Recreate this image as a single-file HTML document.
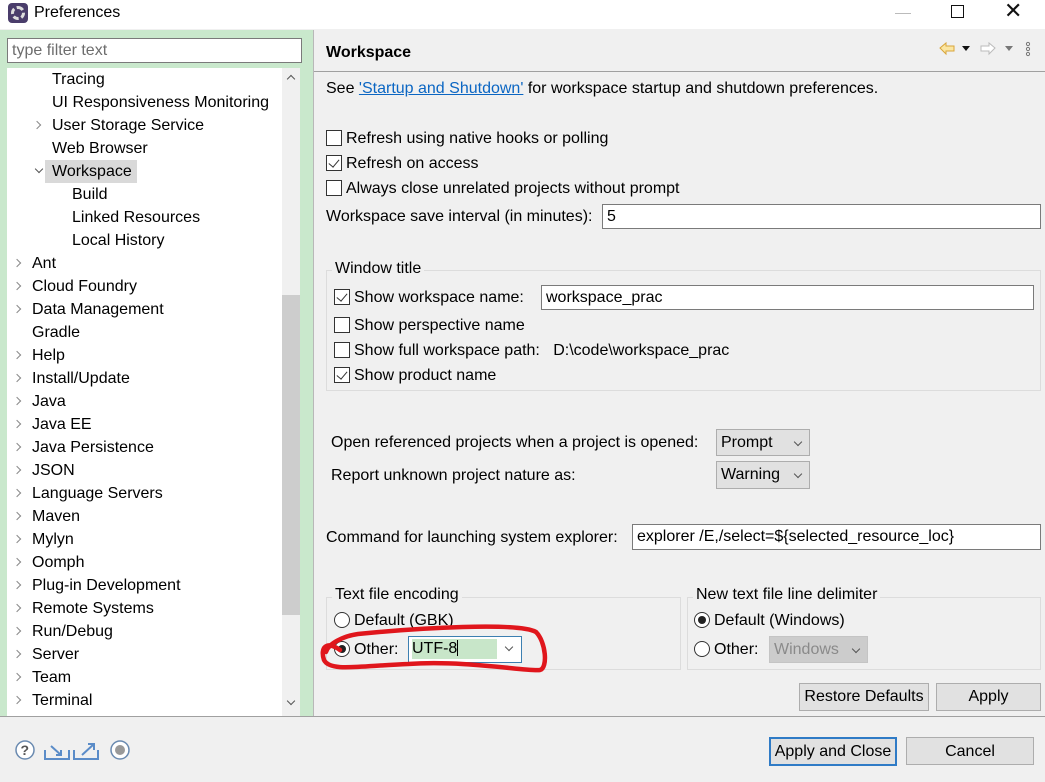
<!DOCTYPE html>
<html><head><meta charset="utf-8"><style>
*{margin:0;padding:0;box-sizing:border-box}
body{width:1045px;height:782px;position:relative;overflow:hidden;background:#f0f0f0;font-family:"Liberation Sans","Noto Sans CJK SC",sans-serif;font-size:16px;color:#000}
.a{position:absolute;white-space:nowrap}
.t{position:absolute;white-space:nowrap;line-height:24px;height:24px}
.cb{position:absolute;width:16px;height:16px;border:1px solid #333;background:#fff}
.cb.on::after{content:"";position:absolute;left:4px;top:1px;width:5px;height:9px;border:solid #333;border-width:0 1.5px 1.5px 0;transform:rotate(40deg)}
.rd{position:absolute;width:16px;height:16px;border:1px solid #333;border-radius:50%;background:#fff}
.rd.on::after{content:"";position:absolute;left:3px;top:3px;width:8px;height:8px;border-radius:50%;background:#222}
.in{position:absolute;background:#fff;border:1px solid #7a7a7a;padding-left:4px;line-height:23px}
.cmb{position:absolute;background:#e1e1e1;border:1px solid #adadad;padding-left:4px;line-height:25px}
.cmb::after{content:"";position:absolute;right:8px;top:9px;width:5px;height:5px;border:solid #555;border-width:0 1px 1px 0;transform:rotate(45deg)}
.grp{position:absolute;border:1px solid #dcdcdc}
.lbl{position:absolute;background:#f0f0f0;padding:0 3px;line-height:18px}
.btn{position:absolute;background:#e1e1e1;border:1px solid #adadad;text-align:center}
.ar{position:absolute;width:6px;height:6px;border:solid #888;border-width:1.3px 1.3px 0 0;transform:rotate(45deg)}
.dn{position:absolute;width:6px;height:6px;border:solid #555;border-width:0 1.3px 1.3px 0;transform:rotate(45deg)}
</style></head><body>
<div class="a" style="left:0;top:0;width:1045px;height:29px;background:#fff"></div>
<div class="a" style="left:8px;top:3px;width:20px;height:20px;border-radius:4px;background:#4a3d6b"></div>
<div class="a" style="left:11px;top:6px;width:14px;height:14px;border-radius:50%;border:3px dashed #ddd;background:#4a3d6b"></div>
<div class="a" style="left:34px;top:2px;font-size:16px;line-height:22px">Preferences</div>
<div class="a" style="left:895px;top:13px;width:16px;height:1px;background:#bbb"></div>
<div class="a" style="left:951px;top:5px;width:13px;height:13px;border:1px solid #111"></div>
<div class="a" style="left:1004px;top:-1px;font-size:22px;line-height:24px;color:#111">✕</div>

<div class="a" style="left:0;top:30px;width:313px;height:686px;background:#c9e8cc"></div>
<div class="a" style="left:7px;top:38px;width:295px;height:25px;background:#fff;border:1px solid #7a7a7a;color:#6d6d6d;padding-left:4px;line-height:23px">type filter text</div>
<div class="a" style="left:7px;top:68px;width:293px;height:648px;background:#fff"></div>
<div class="a" style="left:282px;top:68px;width:18px;height:648px;background:#f0f0f0"></div>
<div class="a" style="left:282px;top:295px;width:18px;height:320px;background:#cdcdcd"></div>
<div class="a" style="left:288px;top:76px;width:6px;height:6px;border:solid #555;border-width:1.3px 0 0 1.3px;transform:rotate(45deg)"></div>
<div class="dn" style="left:288px;top:698px"></div>
<div class="a" style="left:313px;top:30px;width:1px;height:686px;background:#b8b8b8"></div>
<div class="a" style="left:45px;top:160px;width:92px;height:23px;background:#d9d9d9"></div>

<div class="t" style="left:52px;top:68px">Tracing</div>
<div class="t" style="left:52px;top:91px">UI Responsiveness Monitoring</div>
<div class="ar" style="left:34px;top:122px"></div><div class="t" style="left:52px;top:114px">User Storage Service</div>
<div class="t" style="left:52px;top:137px">Web Browser</div>
<div class="dn" style="left:36px;top:166px"></div><div class="t" style="left:52px;top:160px">Workspace</div>
<div class="t" style="left:72px;top:183px">Build</div>
<div class="t" style="left:72px;top:206px">Linked Resources</div>
<div class="t" style="left:72px;top:229px">Local History</div>
<div class="ar" style="left:14px;top:260px"></div><div class="t" style="left:32px;top:252px">Ant</div>
<div class="ar" style="left:14px;top:283px"></div><div class="t" style="left:32px;top:275px">Cloud Foundry</div>
<div class="ar" style="left:14px;top:306px"></div><div class="t" style="left:32px;top:298px">Data Management</div>
<div class="t" style="left:32px;top:321px">Gradle</div>
<div class="ar" style="left:14px;top:352px"></div><div class="t" style="left:32px;top:344px">Help</div>
<div class="ar" style="left:14px;top:375px"></div><div class="t" style="left:32px;top:367px">Install/Update</div>
<div class="ar" style="left:14px;top:398px"></div><div class="t" style="left:32px;top:390px">Java</div>
<div class="ar" style="left:14px;top:421px"></div><div class="t" style="left:32px;top:413px">Java EE</div>
<div class="ar" style="left:14px;top:444px"></div><div class="t" style="left:32px;top:436px">Java Persistence</div>
<div class="ar" style="left:14px;top:467px"></div><div class="t" style="left:32px;top:459px">JSON</div>
<div class="ar" style="left:14px;top:490px"></div><div class="t" style="left:32px;top:482px">Language Servers</div>
<div class="ar" style="left:14px;top:513px"></div><div class="t" style="left:32px;top:505px">Maven</div>
<div class="ar" style="left:14px;top:536px"></div><div class="t" style="left:32px;top:528px">Mylyn</div>
<div class="ar" style="left:14px;top:559px"></div><div class="t" style="left:32px;top:551px">Oomph</div>
<div class="ar" style="left:14px;top:582px"></div><div class="t" style="left:32px;top:574px">Plug-in Development</div>
<div class="ar" style="left:14px;top:605px"></div><div class="t" style="left:32px;top:597px">Remote Systems</div>
<div class="ar" style="left:14px;top:628px"></div><div class="t" style="left:32px;top:620px">Run/Debug</div>
<div class="ar" style="left:14px;top:651px"></div><div class="t" style="left:32px;top:643px">Server</div>
<div class="ar" style="left:14px;top:674px"></div><div class="t" style="left:32px;top:666px">Team</div>
<div class="ar" style="left:14px;top:697px"></div><div class="t" style="left:32px;top:689px">Terminal</div>

<div class="t" style="left:326px;top:41px;font-weight:bold;font-size:16px">Workspace</div>
<div class="a" style="left:314px;top:71px;width:731px;height:1px;background:#a0a0a0"></div>
<svg class="a" style="left:938px;top:40px" width="100" height="18">
<path d="M2 8 L8 3 L8 6 L16 6 L16 11 L8 11 L8 14 Z" fill="#fbe6a2" stroke="#d8a53a"/>
<path d="M24 6 L32 6 L28 11 Z" fill="#111"/>
<path d="M57 8 L51 3 L51 6 L43 6 L43 11 L51 11 L51 14 Z" fill="#fff" stroke="#bbb"/>
<path d="M67 6 L75 6 L71 11 Z" fill="#777"/>
<circle cx="90" cy="4" r="1.6" fill="none" stroke="#777"/><circle cx="90" cy="9" r="1.6" fill="none" stroke="#777"/><circle cx="90" cy="14" r="1.6" fill="none" stroke="#777"/>
</svg>

<div class="t" style="left:326px;top:77px">See <span style="color:#0b66c3;text-decoration:underline">'Startup and Shutdown'</span> for workspace startup and shutdown preferences.</div>
<div class="cb" style="left:326px;top:130px"></div><div class="t" style="left:346px;top:127px">Refresh using native hooks or polling</div>
<div class="cb on" style="left:326px;top:155px"></div><div class="t" style="left:346px;top:152px">Refresh on access</div>
<div class="cb" style="left:326px;top:180px"></div><div class="t" style="left:346px;top:177px">Always close unrelated projects without prompt</div>
<div class="t" style="left:326px;top:205px">Workspace save interval (in minutes):</div>
<div class="in" style="left:602px;top:204px;width:439px;height:25px">5</div>

<div class="grp" style="left:326px;top:270px;width:715px;height:121px"></div>
<div class="lbl" style="left:332px;top:260px">Window title</div>
<div class="cb on" style="left:334px;top:289px"></div><div class="t" style="left:354px;top:286px">Show workspace name:</div>
<div class="in" style="left:541px;top:285px;width:493px;height:25px">workspace_prac</div>
<div class="cb" style="left:334px;top:317px"></div><div class="t" style="left:354px;top:314px">Show perspective name</div>
<div class="cb" style="left:334px;top:342px"></div><div class="t" style="left:354px;top:339px">Show full workspace path:&nbsp;&nbsp; D:\code\workspace_prac</div>
<div class="cb on" style="left:334px;top:367px"></div><div class="t" style="left:354px;top:364px">Show product name</div>

<div class="t" style="left:331px;top:431px">Open referenced projects when a project is opened:</div>
<div class="cmb" style="left:716px;top:429px;width:94px;height:27px">Prompt</div>
<div class="t" style="left:331px;top:464px">Report unknown project nature as:</div>
<div class="cmb" style="left:716px;top:461px;width:94px;height:28px">Warning</div>

<div class="t" style="left:326px;top:526px">Command for launching system explorer:</div>
<div class="in" style="left:632px;top:524px;width:409px;height:26px;line-height:24px">explorer /E,/select=${selected_resource_loc}</div>

<div class="grp" style="left:326px;top:597px;width:355px;height:73px"></div>
<div class="lbl" style="left:332px;top:586px">Text file encoding</div>
<div class="rd" style="left:334px;top:612px"></div><div class="t" style="left:354px;top:609px">Default (GBK)</div>
<div class="rd on" style="left:334px;top:641px"></div><div class="t" style="left:354px;top:638px">Other:</div>
<div class="a" style="left:408px;top:636px;width:114px;height:27px;background:#fff;border:1px solid #3c7fb1"></div>
<div class="a" style="left:412px;top:639px;width:85px;height:20px;background:#c8e6c9;line-height:20px">UTF-8<span style="display:inline-block;width:1px;height:16px;background:#000;vertical-align:-3px"></span></div>
<div class="dn" style="left:506px;top:644px"></div>

<div class="grp" style="left:687px;top:597px;width:354px;height:73px"></div>
<div class="lbl" style="left:693px;top:586px">New text file line delimiter</div>
<div class="rd on" style="left:694px;top:612px"></div><div class="t" style="left:714px;top:609px">Default (Windows)</div>
<div class="rd" style="left:694px;top:641px"></div><div class="t" style="left:714px;top:638px">Other:</div>
<div class="cmb" style="left:769px;top:636px;width:99px;height:27px;background:#cccccc;border-color:#c4c4c4;color:#8a8a8a">Windows</div>

<svg class="a" style="left:318px;top:620px" width="235" height="68">
<path d="M22 30 C8 20 2 28 6 40 C12 52 40 46 90 44 C150 40 210 52 222 50 C230 48 228 22 218 12 C200 2 100 8 40 14 C25 16 10 24 8 32" fill="none" stroke="#e0161c" stroke-width="4.5" stroke-linecap="round"/>
</svg>

<div class="btn" style="left:799px;top:683px;width:130px;height:28px;line-height:26px">Restore Defaults</div>
<div class="btn" style="left:936px;top:683px;width:105px;height:28px;line-height:26px">Apply</div>
<div class="a" style="left:0;top:716px;width:1045px;height:1px;background:#a0a0a0"></div>
<div class="btn" style="left:769px;top:737px;width:128px;height:29px;line-height:26px;border:2px solid #2f7bc6">Apply and Close</div>
<div class="btn" style="left:906px;top:737px;width:128px;height:28px;line-height:27px">Cancel</div>

<svg class="a" style="left:14px;top:738px" width="120" height="26">
<circle cx="11" cy="12" r="9" fill="#fff" stroke="#6a8ab0" stroke-width="1.5"/>
<text x="6.5" y="17" font-size="14" font-weight="bold" fill="#555" font-family="Liberation Sans">?</text>
<path d="M31 12 L31 21 L55 21 L55 12" fill="none" stroke="#5b8cc8" stroke-width="2"/>
<path d="M37 8 L47 17 M42 17 L47 17 L47 12" fill="none" stroke="#5b8cc8" stroke-width="2"/>
<path d="M60 12 L60 21 L84 21 L84 12" fill="none" stroke="#5b8cc8" stroke-width="2"/>
<path d="M68 17 L80 6 M74 6 L80 6 L80 12" fill="none" stroke="#5b8cc8" stroke-width="2"/>
<circle cx="106" cy="12" r="9" fill="#fff" stroke="#6a8ab0" stroke-width="1.5"/>
<circle cx="106" cy="12" r="5" fill="#999"/>
</svg>
</body></html>
